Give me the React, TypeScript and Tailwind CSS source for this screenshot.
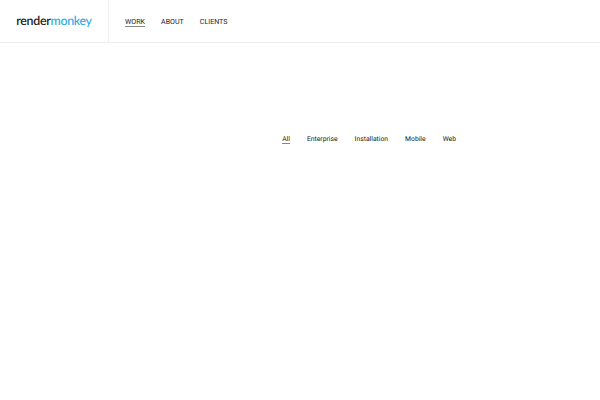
const nav = ["WORK", "ABOUT", "CLIENTS"];
const filters = ["All", "Enterprise", "Installation", "Mobile", "Web"];

export default function App() {
  return (
    <div className="w-[600px] h-[400px] overflow-hidden bg-white font-['Roboto',sans-serif] text-[#222] antialiased [text-rendering:geometricPrecision]">
      <header className="flex h-[43px] border-b border-[#eeeeee]">
        <div className="flex w-[109px] items-center justify-center border-r border-[#eeeeee]">
          <span className="font-['Lato',sans-serif] text-[12.4px] font-semibold tracking-[-0.3px] text-[#222]">
            render<span className="font-medium text-[#29abe2]">monkey</span>
          </span>
        </div>
        <nav className="flex items-center gap-4 pl-4">
          {nav.map((item, i) => (
            <a
              key={item}
              className={
                "text-[7.1px] leading-[9px] mt-px border-b " +
                (i === 0 ? "border-[#888]" : "border-transparent")
              }
            >
              {item}
            </a>
          ))}
        </nav>
      </header>
      <main className="flex justify-end pt-[92px] pr-[144px]">
        <div className="flex gap-[17px]">
          {filters.map((item, i) => (
            <a
              key={item}
              className={
                "text-[6.8px] leading-[8px] border-b " +
                (i === 0 ? "border-[#888]" : "border-transparent")
              }
            >
              {item}
            </a>
          ))}
        </div>
      </main>
    </div>
  );
}
